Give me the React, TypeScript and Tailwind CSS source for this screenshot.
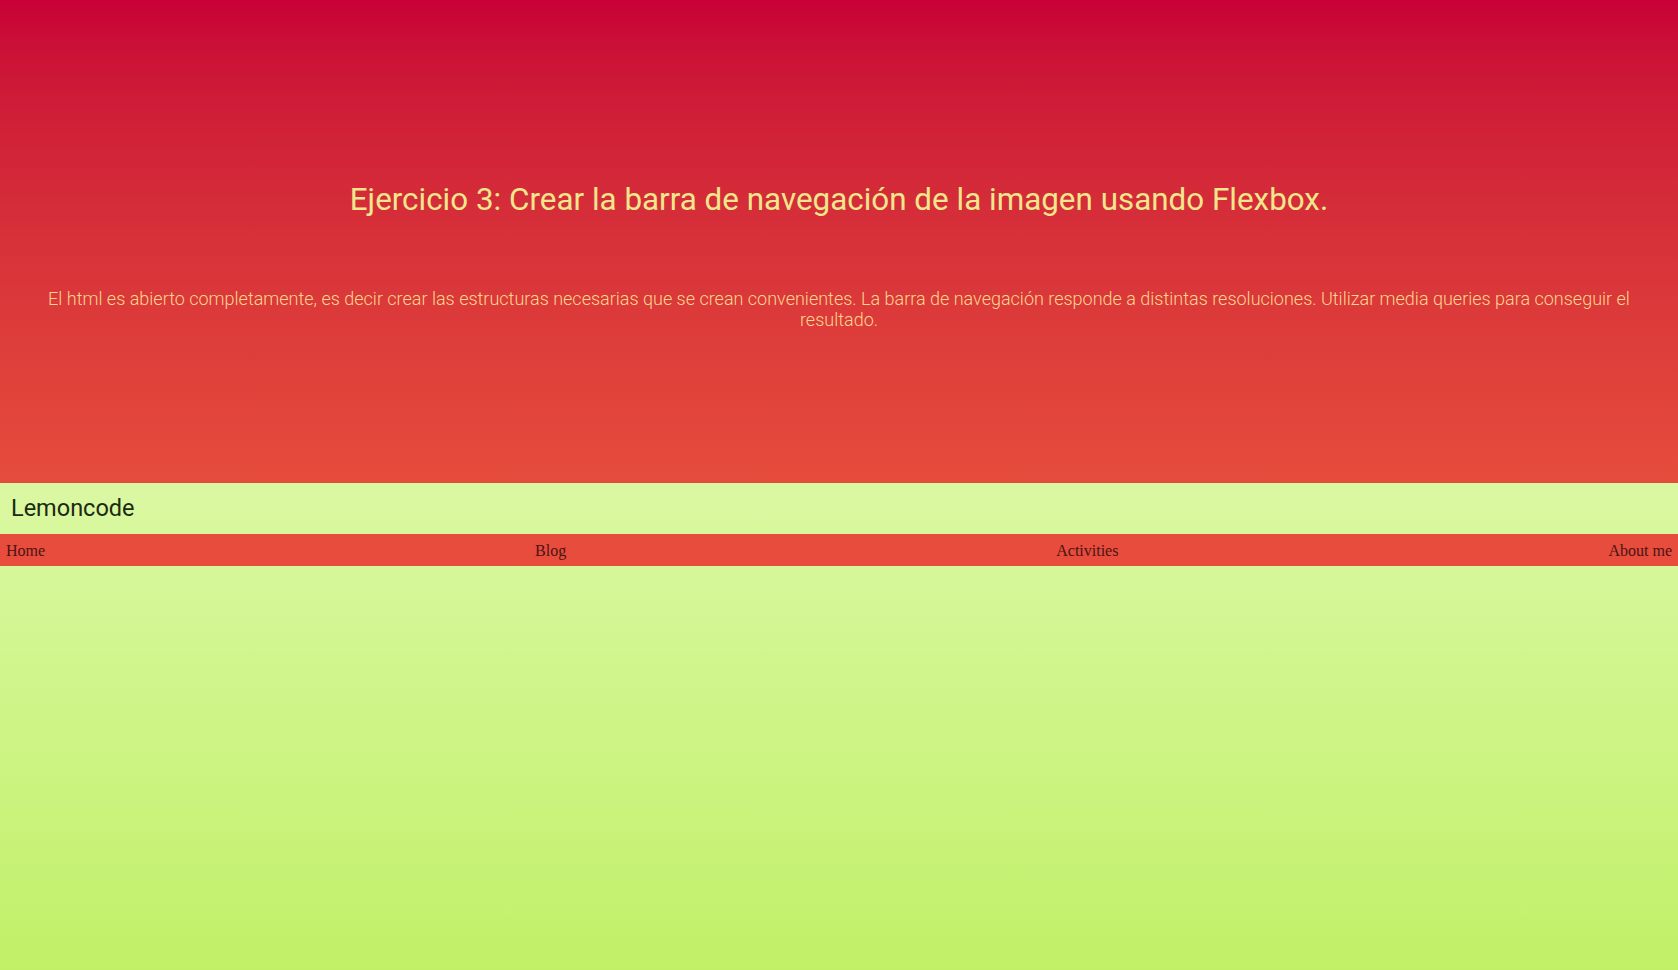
import React from "react";

const links = ["Home", "Blog", "Activities", "About me"];

const App: React.FC = () => {
  return (
    <div className="min-h-screen flex flex-col font-['Roboto',sans-serif]">
      <header className="h-[483px] bg-gradient-to-b from-[#c80036] to-[#e64c3c] text-center pt-[181px]">
        <h1 className="text-[31.4px] leading-[37px] text-[#f0e68c]">
          Ejercicio 3: Crear la barra de navegación de la imagen usando Flexbox.
        </h1>
        <p className="mt-[70px] px-[48px] text-[18px] leading-[21px] font-light text-[#fbd68c]">
          El html es abierto completamente, es decir crear las estructuras necesarias que se crean convenientes. La barra de navegación responde a distintas resoluciones. Utilizar media queries para conseguir el resultado.
        </p>
      </header>
      <div className="flex-1 flex flex-col bg-gradient-to-b from-[#daf8a2] to-[#c1f066]">
        <div className="h-[51px] flex items-center px-[11px]">
          <span className="text-[23.5px] text-[#1c2a12]">Lemoncode</span>
        </div>
        <nav className="h-[32px] bg-[#e74c3c] flex items-center justify-between px-[6px] pt-[2px] font-['Liberation_Serif',serif] text-[16px] text-[#4a1414]">
          {links.map((link) => (
            <a key={link} href="#">
              {link}
            </a>
          ))}
        </nav>
      </div>
    </div>
  );
};

export default App;
